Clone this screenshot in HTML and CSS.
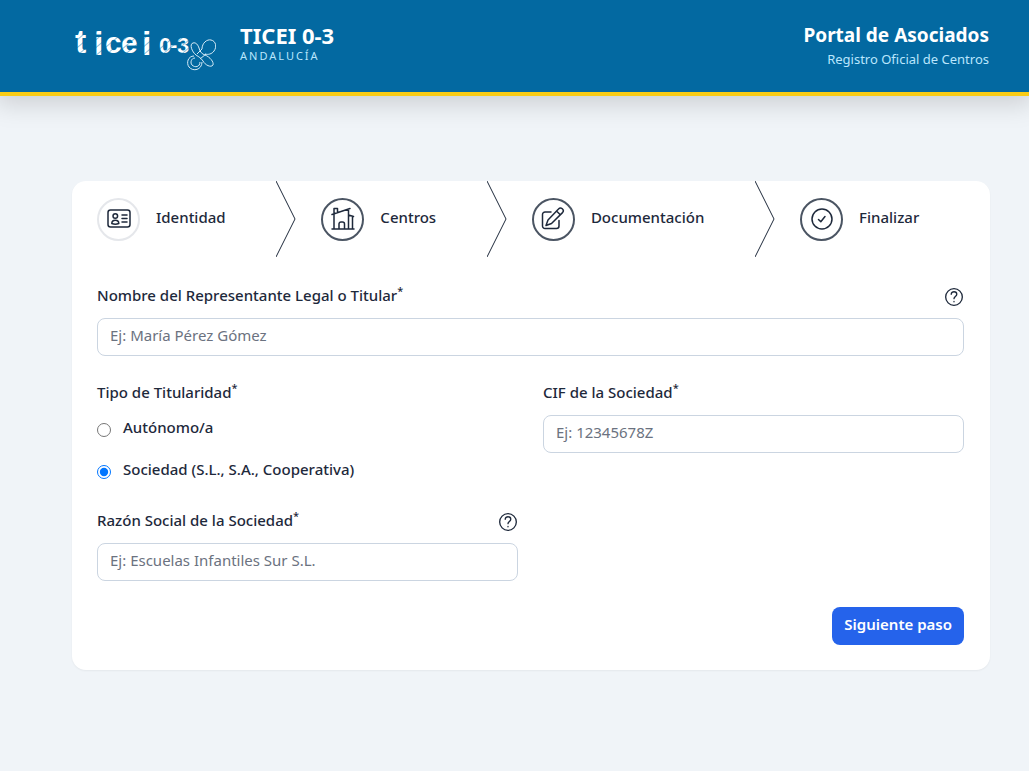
FILE: index.html
```html
<!DOCTYPE html>
<html lang="es">
<head>
    <meta charset="UTF-8">
    <meta name="viewport" content="width=device-width, initial-scale=1.0">
    <title>TICEI 0-3 - Portal de Asociados</title>
    <link rel="stylesheet" href="styles.css">
</head>
<body>
    <header class="header">
        <div class="brand">
            <svg class="logo" viewBox="0 0 144 52" role="img" aria-label="ticei 0-3">
                <defs>
                    <pattern id="stripes" width="6" height="6" patternUnits="userSpaceOnUse" patternTransform="rotate(50)">
                        <rect width="6" height="6" fill="#fff"/>
                        <rect width="1" height="6" fill="#8fbfda"/>
                    </pattern>
                </defs>
                <g class="logo-letters">
                    <text class="logo-tall" x="3" y="33">t</text>
                    <text class="logo-tall" x="22" y="35">i</text>
                    <text x="33" y="33">c</text>
                    <text x="49" y="33">e</text>
                    <text class="logo-tall" x="70" y="35">i</text>
                    <text class="logo-small" x="87" y="33">0</text>
                    <text class="logo-small" x="98" y="32">-</text>
                    <text class="logo-small" x="105" y="33">3</text>
                </g>
                <g class="logo-pacifier">
                    <path d="M130 29c0-6 5-10 9-9 5 1 6 7 3 11-2 3-6 4-9 3"/>
                    <path d="M121 23c3-1 5 2 6 5 1 4 3 6 6 7 5 2 9 7 8 10-2 3-8 0-10-4-2-3-4-4-7-6-4-3-7-11-3-12z"/>
                    <path d="M130 29l-5 5M134 34l-6 5"/>
                    <path d="M122 36c-6 0-8 7-5 11 4 5 13 3 13-5"/>
                    <path d="M123 38c-4 0-5 5-3 7 3 3 8 2 8-3"/>
                </g>
            </svg>
            <div class="brand-text">
                <div class="brand-name">TICEI 0-3</div>
                <div class="brand-region">ANDALUCÍA</div>
            </div>
        </div>
        <div class="portal">
            <div class="portal-title">Portal de Asociados</div>
            <div class="portal-subtitle">Registro Oficial de Centros</div>
        </div>
    </header>

    <main class="main">
        <div class="card">
            <ol class="steps">
                <li class="step">
                    <span class="step-icon active">
                        <svg class="icon" viewBox="0 0 24 24">
                            <rect x="1" y="3" width="22" height="17" rx="2.5"/>
                            <circle cx="8.300" cy="9" r="2.300"/>
                            <path d="M4.800 16.500c0-4.400 7-4.400 7 0-2 .8-5 .8-7 0zM15 8h5M15 11.500h5M15 15h5"/>
                        </svg>
                    </span>
                    <span class="step-label">Identidad</span>
                    <svg class="chevron" viewBox="0 0 20 76"><path d="M0 0l19 38L0 76"/></svg>
                </li>
                <li class="step">
                    <span class="step-icon">
                        <svg class="icon" viewBox="0 0 24 24">
                            <path d="M1 22h22M3 22V6.500M1 7.500L19 1.500M17.500 2v20M3 6.500V1.500h3.500v4M8 22v-5c0-1.200.8-2 2-2h1.500c1.200 0 2 .8 2 2v5M17.500 8l5 1.500M21.500 9.500V22"/>
                        </svg>
                    </span>
                    <span class="step-label">Centros</span>
                    <svg class="chevron" viewBox="0 0 20 76"><path d="M0 0l19 38L0 76"/></svg>
                </li>
                <li class="step">
                    <span class="step-icon">
                        <svg class="icon" viewBox="0 0 24 24">
                            <path d="M10 5H4a2.500 2.500 0 0 0-2.500 2.500V19A2.500 2.500 0 0 0 4 21.500h11.500A2.500 2.500 0 0 0 18 19v-5.500M17.500 2a2.600 2.600 0 0 1 4 3.600L10.500 16.500 5 18.500l2-5.500zM15.500 4l3.800 3.800"/>
                        </svg>
                    </span>
                    <span class="step-label">Documentación</span>
                    <svg class="chevron" viewBox="0 0 20 76"><path d="M0 0l19 38L0 76"/></svg>
                </li>
                <li class="step">
                    <span class="step-icon">
                        <svg class="icon" viewBox="0 0 24 24">
                            <circle cx="12" cy="12" r="10"/>
                            <path d="M8.500 12.500l2.300 2.300 4.200-5.300"/>
                        </svg>
                    </span>
                    <span class="step-label">Finalizar</span>
                </li>
            </ol>

            <form class="form">
                <div class="fields">
                    <div class="field wide">
                        <div class="label-row">
                            <label for="nombre">Nombre del Representante Legal o Titular<sup>*</sup></label>
                            <button type="button" class="help" aria-label="Ayuda">
                                <svg class="help-icon" viewBox="0 0 18 18"><circle cx="9" cy="9" r="7.500"/><path d="M6.500 6.500C6.500 3.500 11.500 3.500 11.500 6.500c0 2-2.500 2-2.500 4M9 13v.3"/></svg>
                            </button>
                        </div>
                        <input type="text" id="nombre" class="input" placeholder="Ej: María Pérez Gómez">
                    </div>

                    <fieldset class="field">
                        <legend class="label-row"><span>Tipo de Titularidad<sup>*</sup></span></legend>
                        <div class="options">
                            <div class="option">
                                <input type="radio" name="tipo" id="autonomo" value="autonomo">
                                <label for="autonomo">Autónomo/a</label>
                            </div>
                            <div class="option">
                                <input type="radio" name="tipo" id="sociedad" value="sociedad" checked>
                                <label for="sociedad">Sociedad (S.L., S.A., Cooperativa)</label>
                            </div>
                        </div>
                    </fieldset>

                    <div class="field">
                        <div class="label-row">
                            <label for="cif">CIF de la Sociedad<sup>*</sup></label>
                        </div>
                        <input type="text" id="cif" class="input" placeholder="Ej: 12345678Z">
                    </div>

                    <div class="field">
                        <div class="label-row">
                            <label for="razon">Razón Social de la Sociedad<sup>*</sup></label>
                            <button type="button" class="help" aria-label="Ayuda">
                                <svg class="help-icon" viewBox="0 0 18 18"><circle cx="9" cy="9" r="7.500"/><path d="M6.500 6.500C6.500 3.500 11.500 3.500 11.500 6.500c0 2-2.500 2-2.500 4M9 13v.3"/></svg>
                            </button>
                        </div>
                        <input type="text" id="razon" class="input" placeholder="Ej: Escuelas Infantiles Sur S.L.">
                    </div>
                </div>

                <div class="actions">
                    <button type="submit" class="next">Siguiente paso</button>
                </div>
            </form>
        </div>
    </main>
</body>
</html>
```
FILE: styles.css
```css
* {
    box-sizing: border-box;
}

body {
    margin: 0;
    background-color: #f0f4f8;
    color: #1e293b;
    font-family: "Noto Sans", sans-serif;
    font-size: 15px;
    line-height: 20px;
    font-weight: 500;
}

.header {
    display: flex;
    justify-content: space-between;
    align-items: center;
    padding: 20px 40px 20px 72px;
    background-color: #0369a1;
    border-bottom: 4px solid #facc15;
    box-shadow: 0 4px 24px 4px rgba(0, 0, 0, 0.15);
    color: white;
}

.brand {
    display: flex;
    align-items: center;
    gap: 24px;
}

.logo {
    width: 144px;
    height: 52px;
}

.logo-letters {
    fill: url(#stripes);
    font-family: "Liberation Sans", sans-serif;
    font-weight: bold;
    font-size: 30px;
}

.logo-tall {
    font-size: 34px;
}

.logo-small {
    font-size: 22px;
}

.logo-pacifier {
    fill: none;
    stroke: #d6ebf7;
    stroke-width: 1;
}

.brand-text {
    padding-bottom: 6px;
}

.brand-name {
    font-size: 22px;
    line-height: 26px;
    font-weight: 700;
}

.brand-region {
    color: #bae6fd;
    font-size: 11px;
    line-height: 16px;
    font-weight: 400;
    letter-spacing: 2px;
}

.portal {
    padding-bottom: 2px;
    text-align: right;
}

.portal-title {
    font-size: 19px;
    line-height: 28px;
    font-weight: 700;
}

.portal-subtitle {
    color: #bae6fd;
    font-size: 13px;
    line-height: 20px;
    font-weight: 400;
}

.main {
    padding: 85px 39px 85px 72px;
}

.card {
    background-color: white;
    border-radius: 14px;
    box-shadow: 0 1px 2px rgba(0, 0, 0, 0.05);
}

.steps {
    display: flex;
    margin: 0;
    padding: 0;
    list-style: none;
}

.step {
    flex: 1 1 auto;
    display: flex;
    align-items: center;
    gap: 16px;
    height: 76px;
    padding-left: 25px;
}

.step:last-child {
    padding-right: 36px;
}

.step-icon {
    display: flex;
    align-items: center;
    justify-content: center;
    width: 43px;
    height: 43px;
    border: 2px solid #4b5563;
    border-radius: 50%;
}

.step-icon.active {
    border-color: #e5e7eb;
}

.step-label {
    padding-bottom: 4px;
}

.icon,
.help-icon,
.chevron {
    fill: none;
    stroke: #1e293b;
    stroke-linecap: round;
    stroke-linejoin: round;
}

.icon {
    width: 24px;
    height: 24px;
    stroke-width: 1.5;
}

.chevron {
    width: 20px;
    height: 76px;
    margin-left: auto;
}

.form {
    padding: 26px 26px 25px 25px;
}

.fields {
    display: grid;
    grid-template-columns: 1fr 1fr;
    gap: 24px 25px;
}

.field {
    min-width: 0;
    margin: 0;
    padding: 0;
    border: 0;
}

.wide {
    grid-column: 1 / -1;
}

.label-row {
    display: flex;
    justify-content: space-between;
    align-items: center;
    height: 28px;
    margin-bottom: 7px;
    padding: 0;
}

.label-row label,
.label-row span {
    padding-bottom: 4px;
}

sup {
    font-size: 11px;
    line-height: 0;
}

.help {
    display: flex;
    padding: 0;
    border: 0;
    background: none;
    cursor: pointer;
}

.help-icon {
    width: 20px;
    height: 20px;
    stroke-width: 1.2;
}

.input {
    display: block;
    width: 100%;
    height: 38px;
    padding: 0 12px 4px;
    border: 1px solid #cbd5e1;
    border-radius: 8px;
    background-color: white;
    color: #1e293b;
    font: inherit;
    font-weight: 400;
}

.input::placeholder {
    color: #6b7280;
}

.options {
    display: flex;
    flex-direction: column;
    gap: 22px;
    padding: 2px 0 5px;
}

.option {
    display: flex;
    align-items: flex-end;
    gap: 12px;
}

.option input {
    width: 14px;
    height: 14px;
    margin: 0;
    accent-color: #0075ff;
}

.actions {
    display: flex;
    justify-content: flex-end;
    margin-top: 26px;
}

.next {
    height: 38px;
    padding: 0 12px 4px;
    border: none;
    border-radius: 8px;
    background-color: #2563eb;
    color: white;
    font: inherit;
    font-weight: 600;
    cursor: pointer;
}

.next:hover {
    background-color: #1d4ed8;
}
```
